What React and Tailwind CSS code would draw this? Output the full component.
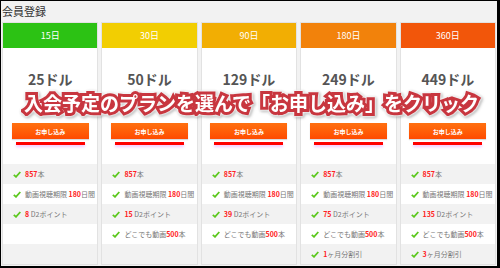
import React from "react";

const plans = [
  { days: "15日", price: "25", color: "bg-[#2cc214]", point: "8", anywhere: false, discount: null },
  { days: "30日", price: "50", color: "bg-[#f2ce02]", point: "15", anywhere: true, discount: null },
  { days: "90日", price: "129", color: "bg-[#f2ae03]", point: "39", anywhere: true, discount: null },
  { days: "180日", price: "249", color: "bg-[#f2820b]", point: "75", anywhere: true, discount: "1" },
  { days: "360日", price: "449", color: "bg-[#f2560a]", point: "135", anywhere: true, discount: "3" },
];

function Check() {
  return (
    <svg width="8" height="7" viewBox="0 0 8 7" className="shrink-0">
      <path d="M0.8 3.8 L3 5.8 L7.3 1" stroke="#5cc81e" strokeWidth="1.8" fill="none" />
    </svg>
  );
}

function Row({ children, gray }) {
  return (
    <div className={`h-[20px] flex items-center gap-[4px] pl-[10px] text-[7px] text-[#777] ${gray ? "bg-[#f2f2f2]" : "bg-white"}`}>
      {children}
    </div>
  );
}

function Plan({ p }) {
  return (
    <div className="flex flex-col border border-[#e2e2e2] bg-white">
      <div className={`${p.color} h-[25px] flex items-center justify-center text-white text-[9px]`}>{p.days}</div>
      <div className="h-[43px] flex items-end justify-center pb-[1px] text-[14px] font-bold text-[#555]">
        {p.price}ドル
      </div>
      <div className="flex flex-col items-center pt-[32px] h-[73px]">
        <div className="w-[77px] h-[16px] bg-gradient-to-b from-[#ff7010] to-[#ff4a00] flex items-center justify-center text-white text-[6px] font-bold shadow-[0_1px_1px_rgba(0,0,0,0.15)]">
          お申し込み
        </div>
        <div className="mt-[3px] w-[69px] h-[3px] bg-[#ff0000] shadow-[0_2px_3px_#f3c6ff]"></div>
      </div>
      <Row gray>
        <Check />
        <span><b className="text-[#ff2020]">857</b>本</span>
      </Row>
      <Row>
        <Check />
        <span>動画視聴期限 <b className="text-[#ff2020]">180</b>日間</span>
      </Row>
      <Row gray>
        <Check />
        <span><b className="text-[#ff2020]">{p.point}</b> D2ポイント</span>
      </Row>
      <Row>
        {p.anywhere && (
          <>
            <Check />
            <span>どこでも動画<b className="text-[#ff2020]">500</b>本</span>
          </>
        )}
      </Row>
      <Row gray>
        {p.discount && (
          <>
            <Check />
            <span><b className="text-[#ff2020]">{p.discount}</b>ヶ月分割引</span>
          </>
        )}
      </Row>
    </div>
  );
}

export default function App() {
  return (
    <div className="relative w-[500px] h-[268px] bg-[#f2f2f2] border-l border-t border-r-[3px] border-b-2 border-black font-['Noto_Sans_CJK_JP',sans-serif] overflow-hidden">
      <div className="h-[21px] flex items-center pl-[1px] text-[11px] text-[#333]">会員登録</div>
      <div className="grid grid-cols-5 gap-[3px] pl-[1px] w-[495px]">
        {plans.map((p) => (
          <Plan key={p.days} p={p} />
        ))}
      </div>
      <div className="absolute left-[23px] top-[89px] text-[19px] leading-[26px] font-bold text-white whitespace-nowrap [-webkit-text-stroke:6px_#c8363f] [paint-order:stroke_fill] [filter:drop-shadow(0_0_1px_#fff)_drop-shadow(0_0_1px_#fff)_drop-shadow(1px_1px_1px_rgba(0,0,0,0.35))]">
        入会予定のプランを選んで「お申し込み」をクリック
      </div>
    </div>
  );
}
